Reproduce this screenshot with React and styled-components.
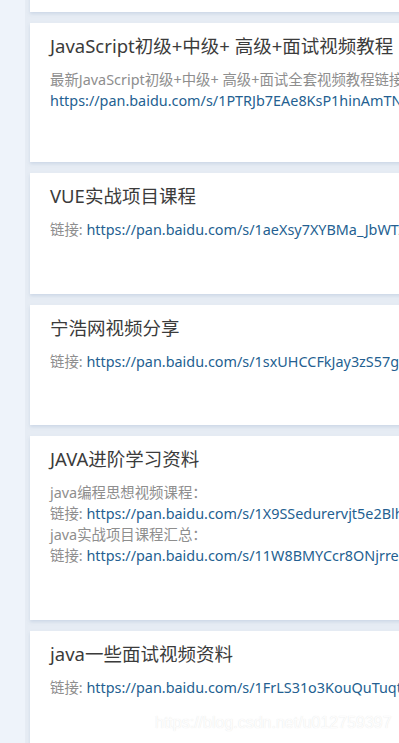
import React from "react";
import styled, { createGlobalStyle } from "styled-components";

const GlobalStyle = createGlobalStyle`
  html, body {
    margin: 0;
    padding: 0;
    background: #e6ecf4;
    overflow: hidden;
  }
  body {
    font-family: "Noto Sans", "Noto Sans CJK SC", sans-serif;
  }
`;

const Page = styled.div`
  position: relative;
  width: 399px;
  height: 743px;
  overflow: hidden;
  display: flex;
  align-items: flex-start;
  background: #e6ecf4;
`;

const Rail = styled.div`
  width: 25px;
  height: 100%;
  flex-shrink: 0;
  background: #eef3fa;
`;

const List = styled.div`
  flex: 1;
  display: flex;
  flex-direction: column;
  gap: 11px;
  padding-left: 5px;
  margin-top: -127px;
`;

const Card = styled.div`
  flex-shrink: 0;
  width: 720px;
  background: #fff;
  box-sizing: border-box;
  padding: 11px 20px 0;
  height: ${(p) => p.h}px;
  box-shadow: 0 2px 3px rgba(160, 180, 205, 0.35);
`;

const Title = styled.h3`
  margin: 0 0 11px;
  font-size: 18.5px;
  font-weight: 400;
  line-height: 24px;
  color: #3b3b3b;
  white-space: nowrap;
`;

const Line = styled.div`
  font-size: 14.4px;
  line-height: 21px;
  color: #8e8e8e;
  white-space: nowrap;
`;

const Link = styled.a`
  color: #245f91;
  text-decoration: none;
`;

const Watermark = styled.div`
  position: absolute;
  left: 155px;
  top: 713px;
  font-family: "Liberation Sans", Arial, sans-serif;
  font-size: 16px;
  line-height: 20px;
  color: rgba(255, 255, 255, 0.95);
  text-shadow: 0 0 1px rgba(180, 180, 180, 0.4);
  white-space: nowrap;
`;

const cards = [
  { h: 139, lines: [] },
  {
    h: 139,
    title: "JavaScript初级+中级+ 高级+面试视频教程",
    lines: [
      { text: "最新JavaScript初级+中级+ 高级+面试全套视频教程链接：" },
      { label: "", url: "https://pan.baidu.com/s/1PTRJb7EAe8KsP1hinAmTNw" },
    ],
  },
  {
    h: 121,
    title: "VUE实战项目课程",
    lines: [{ label: "链接: ", url: "https://pan.baidu.com/s/1aeXsy7XYBMa_JbWTzhqLbw" }],
  },
  {
    h: 120,
    title: "宁浩网视频分享",
    lines: [{ label: "链接: ", url: "https://pan.baidu.com/s/1sxUHCCFkJay3zS57gk" }],
  },
  {
    h: 184,
    title: "JAVA进阶学习资料",
    lines: [
      { text: "java编程思想视频课程：" },
      { label: "链接: ", url: "https://pan.baidu.com/s/1X9SSedurervjt5e2BlhQ" },
      { text: "java实战项目课程汇总：" },
      { label: "链接: ", url: "https://pan.baidu.com/s/11W8BMYCcr8ONjrredQ" },
    ],
  },
  {
    h: 160,
    title: "java一些面试视频资料",
    lines: [{ label: "链接: ", url: "https://pan.baidu.com/s/1FrLS31o3KouQuTuqtA" }],
  },
];

export default function App() {
  return (
    <Page>
      <GlobalStyle />
      <Rail />
      <List>
        {cards.map((c, i) => (
          <Card key={i} h={c.h}>
            {c.title && <Title>{c.title}</Title>}
            {c.lines.map((l, j) => (
              <Line key={j}>
                {l.text ? (
                  l.text
                ) : (
                  <>
                    {l.label}
                    <Link href="#">{l.url}</Link>
                  </>
                )}
              </Line>
            ))}
          </Card>
        ))}
      </List>
      <Watermark>https://blog.csdn.net/u012759397</Watermark>
    </Page>
  );
}
